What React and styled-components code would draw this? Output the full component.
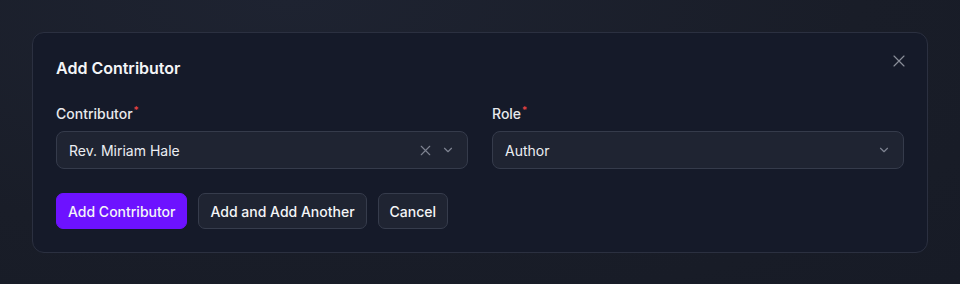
import React from 'react';
import styled, { createGlobalStyle } from 'styled-components';

const GlobalStyle = createGlobalStyle`
  html, body {
    margin: 0;
    padding: 0;
    background: #1a1f2b;
    font-family: Inter, "Liberation Sans", sans-serif;
  }
  * { box-sizing: border-box; }
`

const Page = styled.div`
  width: 960px;
  height: 284px;
  padding: 32px;
  background: radial-gradient(ellipse at 30% 0%, #1e2331 0%, #191d28 60%, #171b26 100%);
`

const Dialog = styled.div`
  position: relative;
  background: #151a29;
  border: 1px solid #2b3040;
  border-radius: 12px;
  padding: 23px;
  display: flex;
  flex-direction: column;
  gap: 24px;
`

const Title = styled.h2`
  margin: 0;
  font-size: 16px;
  line-height: 24px;
  font-weight: 600;
  color: #f4f5f7;
`

const CloseButton = styled.button`
  position: absolute;
  top: 18px;
  right: 18px;
  width: 20px;
  height: 20px;
  padding: 0;
  border: none;
  background: none;
  color: #8a8e99;
  display: flex;
  align-items: center;
  justify-content: center;
`

const FieldRow = styled.div`
  display: grid;
  grid-template-columns: 1fr 1fr;
  gap: 24px;
`

const Field = styled.div`
  display: flex;
  flex-direction: column;
  gap: 7px;
`

const Label = styled.label`
  font-size: 14px;
  line-height: 20px;
  font-weight: 500;
  color: #e8e9ec;
`

const Required = styled.span`
  position: relative;
  top: -5px;
  margin-left: 1px;
  color: #ef4444;
  font-size: 10px;
  line-height: 0;
`

const Select = styled.div`
  height: 38px;
  border: 1px solid #353b4b;
  border-radius: 8px;
  background: #1f2432;
  display: flex;
  align-items: center;
  padding: 0 12px;
  font-size: 14px;
  color: #eceef2;
`

const Value = styled.span`
  flex: 1;
`

const Icons = styled.div`
  display: flex;
  align-items: center;
  gap: 7px;
  color: #7e8391;
`

const Actions = styled.div`
  display: flex;
  gap: 11px;
`

const Button = styled.button`
  height: 36px;
  padding: 0 11px;
  border-radius: 7px;
  font-family: inherit;
  font-size: 14px;
  font-weight: 500;
  color: #f4f5f7;
  border: 1px solid ${p => (p.primary ? '#6d12ff' : '#363c4c')};
  background: ${p => (p.primary ? '#6d12ff' : '#1f2432')};
`

const XIcon = ({ size = 16, width = 1.6 }) => (
  <svg width={size} height={size} viewBox="0 0 24 24" fill="none" stroke="currentColor" strokeWidth={width} strokeLinecap="round">
    <path d="M18 6 6 18M6 6l12 12" />
  </svg>
)

const Chevron = () => (
  <svg width="14" height="14" viewBox="0 0 24 24" fill="none" stroke="currentColor" strokeWidth="2" strokeLinecap="round" strokeLinejoin="round">
    <path d="m6 9 6 6 6-6" />
  </svg>
)

export default function App() {
  return (
    <Page>
      <GlobalStyle />
      <Dialog>
        <Title>Add Contributor</Title>
        <CloseButton><XIcon size={22} width={1.4} /></CloseButton>
        <FieldRow>
          <Field>
            <Label>Contributor<Required>*</Required></Label>
            <Select>
              <Value>Rev. Miriam Hale</Value>
              <Icons>
                <XIcon size={17} />
                <Chevron />
              </Icons>
            </Select>
          </Field>
          <Field>
            <Label>Role<Required>*</Required></Label>
            <Select>
              <Value>Author</Value>
              <Icons>
                <Chevron />
              </Icons>
            </Select>
          </Field>
        </FieldRow>
        <Actions>
          <Button primary>Add Contributor</Button>
          <Button>Add and Add Another</Button>
          <Button>Cancel</Button>
        </Actions>
      </Dialog>
    </Page>
  );
}
